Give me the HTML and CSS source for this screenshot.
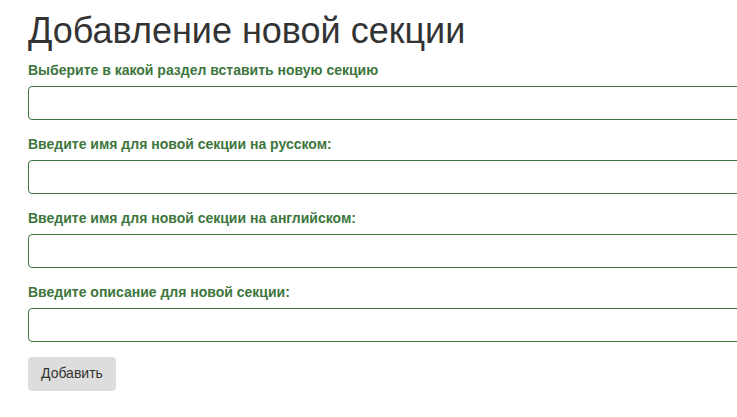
FILE: index.html
```html
<!DOCTYPE html>
<html lang="ru">
<head>
<meta charset="utf-8">
<title>Добавление новой секции</title>
<link rel="stylesheet" href="styles.css">
</head>
<body>
<div class="page">
  <h1 class="title">Добавление новой секции</h1>
  <form class="form">
    <div class="form-group">
      <label class="label">Выберите в какой раздел вставить новую секцию</label>
      <input class="input" type="text">
    </div>
    <div class="form-group">
      <label class="label">Введите имя для новой секции на русском:</label>
      <input class="input" type="text">
    </div>
    <div class="form-group">
      <label class="label">Введите имя для новой секции на английском:</label>
      <input class="input" type="text">
    </div>
    <div class="form-group">
      <label class="label">Введите описание для новой секции:</label>
      <input class="input" type="text">
    </div>
    <button class="btn" type="button">Добавить</button>
  </form>
</div>
</body>
</html>
```
FILE: styles.css
```css
html, body {
  margin: 0;
  padding: 0;
  overflow: hidden;
  background: #fff;
}
body {
  font-family: "Liberation Sans", Arial, sans-serif;
  font-size: 14px;
  line-height: 1.42857;
  color: #333;
}
.page {
  padding: 11px 0 0 28px;
  overflow: hidden;
}
.title {
  margin: 0 0 10px;
  font-size: 36px;
  font-weight: 500;
  line-height: 1.1;
  color: #333;
}
.form {
  width: 800px;
}
.form-group {
  margin-bottom: 15px;
}
.label {
  display: block;
  margin-bottom: 5px;
  font-weight: bold;
  color: #3c763d;
}
.input {
  display: block;
  box-sizing: border-box;
  width: 100%;
  height: 34px;
  margin: 0;
  padding: 6px 12px;
  border: 1px solid #3c763d;
  border-radius: 4px;
  background: #fff;
  font: inherit;
  color: #555;
  outline: none;
}
.btn {
  display: inline-block;
  box-sizing: border-box;
  height: 34px;
  margin: 0;
  padding: 6px 12px;
  border: 1px solid transparent;
  border-radius: 4px;
  background: #ddd;
  font: inherit;
  color: #333;
  cursor: pointer;
}
```
